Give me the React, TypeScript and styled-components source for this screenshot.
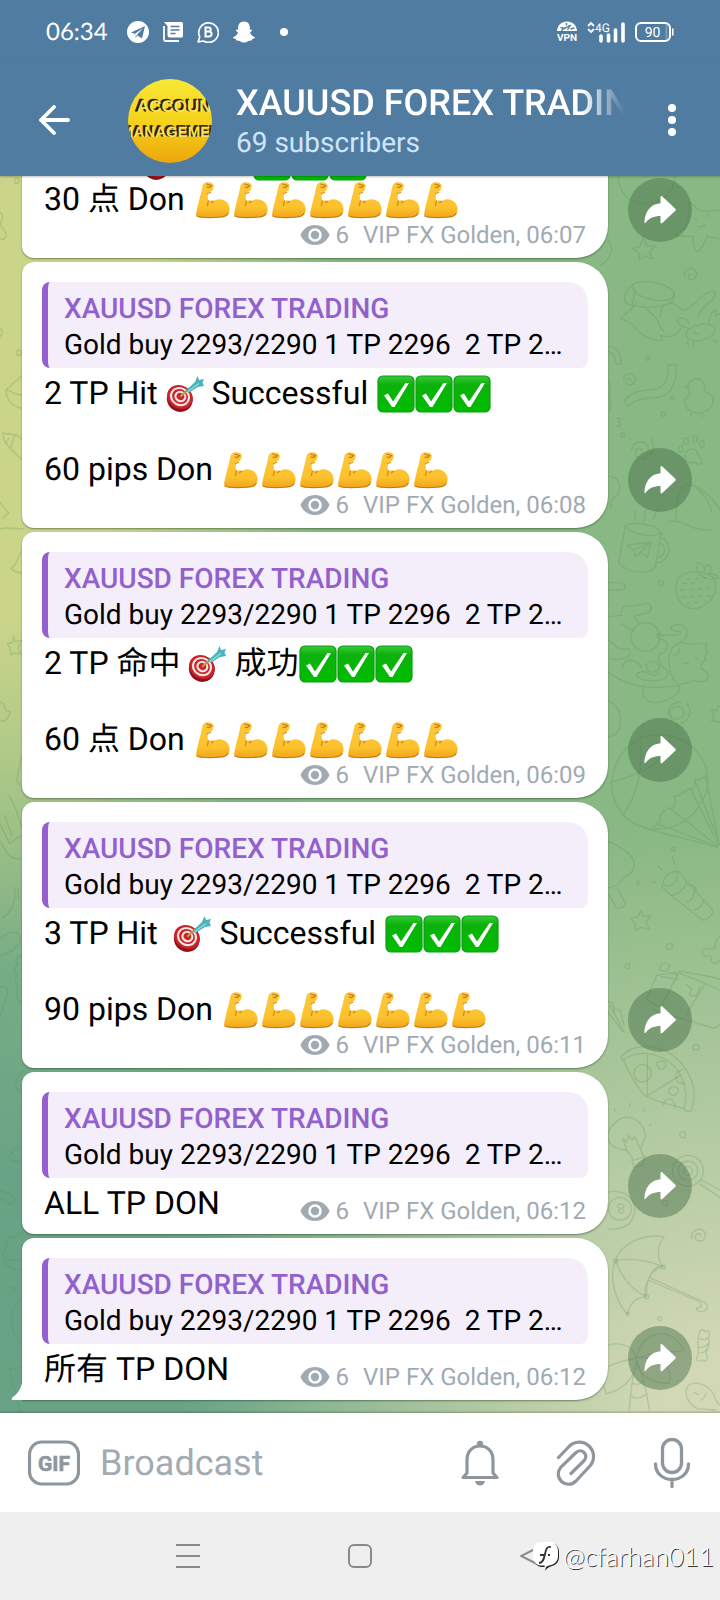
import React from "react";
import styled, { createGlobalStyle } from "styled-components";

const GlobalStyle = createGlobalStyle`
  * { box-sizing: border-box; }
  body { margin: 0; }
  button, input { font: inherit; }
`;

const Screen = styled.div`
  display: flex;
  flex-direction: column;
  height: 100vh;
  overflow: hidden;
  font-family: Roboto, "Noto Sans CJK SC", sans-serif;
  text-rendering: geometricPrecision;
  color: #000;
  svg { display: block; flex: none; }
`;

const StatusBar = styled.div`
  display: flex;
  align-items: center;
  justify-content: space-between;
  height: 64px;
  padding: 0 46px;
  background: #517ca2;
  color: #fff;
`;

const StatusGroup = styled.div<{ $gap: number }>`
  display: flex;
  align-items: center;
  gap: ${(p) => p.$gap}px;
`;

const Clock = styled.time`
  margin-right: 5px;
  font-family: Lato, sans-serif;
  font-size: 24px;
  line-height: 28px;
`;

const Header = styled.header`
  position: relative;
  z-index: 1;
  display: flex;
  align-items: center;
  height: 112px;
  padding-top: 2px;
  background: #517ca2;
  color: #fff;
  box-shadow: 0 1px 2px rgba(0, 0, 0, 0.25);
`;

const IconButton = styled.button<{ $width: number }>`
  display: flex;
  flex: none;
  align-items: center;
  justify-content: center;
  width: ${(p) => p.$width}px;
  height: 88px;
  padding: 0;
  border: 0;
  background: none;
  color: inherit;
`;

const Avatar = styled.div`
  flex: none;
  width: 84px;
  height: 84px;
  margin: 0 24px 0 18px;
  border-radius: 50%;
  overflow: hidden;
  background: linear-gradient(#f8e836, #f6d21c 50%, #eda70c);
`;

const Heading = styled.div`
  flex: 1;
  min-width: 0;
`;

const ChannelName = styled.h1`
  margin: 0 0 2px;
  overflow: hidden;
  font-size: 36px;
  font-weight: 500;
  line-height: 42px;
  white-space: nowrap;
  mask-image: linear-gradient(to right, #000 calc(100% - 42px), transparent);
`;

const Subscribers = styled.p`
  margin: 0;
  color: #cfe5fb;
  font-size: 28px;
  line-height: 34px;
`;

const Chat = styled.main`
  position: relative;
  display: flex;
  flex: 1;
  flex-direction: column;
  justify-content: flex-end;
  gap: 4px;
  min-height: 0;
  padding: 0 28px 13px 22px;
  overflow: hidden;
  background:
    radial-gradient(ellipse 340px 52% at 0% 12%, #cbd58a 45%, #cbd58a00 100%),
    radial-gradient(ellipse 75% 48% at 100% 100%, #d2d8b5 10%, #d2d8b500 100%),
    radial-gradient(ellipse 90% 56% at 0% 100%, #69a386 35%, #69a38600 100%),
    #88b884;
`;

const Doodles = styled.svg<{ $side: "left" | "right" }>`
  position: absolute;
  top: 0;
  ${(p) => p.$side}: 0;
  fill: none;
  stroke: #588f50;
  stroke-opacity: 0.25;
  stroke-width: 4;
  stroke-linecap: round;
  stroke-linejoin: round;
`;

const MessageRow = styled.article`
  position: relative;
  display: flex;
  flex: none;
  align-items: flex-end;
  gap: 20px;
`;

const Bubble = styled.div<{ $last: boolean }>`
  position: relative;
  flex: 1;
  min-width: 0;
  padding: 20px 20px 9px;
  border-radius: 12px 32px 32px ${(p) => (p.$last ? 0 : 12)}px;
  background: #fff;
  box-shadow: 0 1px 2px rgba(40, 70, 40, 0.55);
`;

const Tail = styled.svg`
  position: absolute;
  bottom: 0;
  left: -11px;
`;

const Quote = styled.blockquote`
  margin: 0 0 6px;
  padding: 9px 16px 5px;
  border-left: 6px solid #955fd0;
  border-radius: 8px 20px 8px 8px;
  background: #f4eefa;
  font-size: 28px;
  line-height: 36px;
  white-space: pre;
  overflow: hidden;
`;

const QuoteAuthor = styled.div`
  color: #9261cb;
  font-weight: 500;
`;

const Body = styled.div<{ $inline: boolean }>`
  display: flex;
  flex-direction: ${(p) => (p.$inline ? "row" : "column")};
  align-items: flex-end;
  justify-content: space-between;
  padding: 0 2px;
`;

const BodyText = styled.p`
  align-self: stretch;
  margin: 0;
  padding-bottom: 3px;
  font-size: 32px;
  line-height: 38px;
  white-space: pre-wrap;
`;

const Emoji = styled.svg`
  && { display: inline-block; }
  width: 38px;
  height: 38px;
  margin: -4px 0;
  overflow: visible;
  vertical-align: -5px;
`;

const Meta = styled.div`
  display: flex;
  align-items: center;
  color: #a1aab3;
  font-size: 24px;
  line-height: 28px;
  white-space: nowrap;
`;

const Views = styled.span`
  margin: 0 14px 0 6px;
`;

const ShareButton = styled.button<{ $last: boolean }>`
  display: flex;
  flex: none;
  align-items: center;
  justify-content: center;
  width: 64px;
  height: 64px;
  margin-bottom: ${(p) => (p.$last ? 10 : 16)}px;
  padding: 0;
  border: 0;
  border-radius: 50%;
  background: rgba(70, 110, 75, 0.46);
  color: #fff;
`;

const Composer = styled.form`
  position: relative;
  display: flex;
  align-items: center;
  height: 99px;
  padding-left: 28px;
  background: #fff;
  color: #8e979e;
  box-shadow: 0 -1px 2px rgba(0, 0, 0, 0.25);
`;

const Field = styled.input`
  flex: 1;
  min-width: 0;
  margin-left: 20px;
  padding: 0;
  border: 0;
  outline: 0;
  background: none;
  font-size: 36px;
  line-height: 42px;
  text-rendering: inherit;
  &::placeholder { color: #a3abb2; opacity: 1; }
`;

const NavBar = styled.nav`
  position: relative;
  display: flex;
  justify-content: center;
  height: 88px;
  background: #efefef;
  color: #8a8a8a;
`;

const Watermark = styled.div`
  position: absolute;
  right: 6px;
  bottom: 28px;
  display: flex;
  align-items: center;
  gap: 4px;
  color: #fff;
  font-family: Lato, sans-serif;
  font-size: 26px;
  font-weight: 300;
  line-height: 32px;
  text-shadow: 1px 1px 0 #333;
`;

const Check = () => (
  <Emoji viewBox="-1 0 38 38" role="img" aria-label="check mark">
    <defs>
      <linearGradient id="check" x2="0" y2="1">
        <stop offset="0" stopColor="#39c93a" />
        <stop offset=".25" stopColor="#0cb10c" />
        <stop offset="1" stopColor="#00bd00" />
      </linearGradient>
    </defs>
    <rect x="1" y="1" width="36" height="36" rx="5" fill="url(#check)" stroke="#0a9f10" strokeWidth="1.2" />
    <path d="M7 20.500l4-2 5 8L28.500 8H32L17.500 32h-2.500z" fill="#fff" />
  </Emoji>
);

const Muscle = () => (
  <Emoji viewBox="-1 0 38 38" role="img" aria-label="flexed arm">
    <defs>
      <linearGradient id="arm" x2="0" y2="1">
        <stop offset="0" stopColor="#fdc83c" />
        <stop offset=".7" stopColor="#fcc22e" />
        <stop offset="1" stopColor="#f0a41a" />
      </linearGradient>
    </defs>
    <path
      d="M8.500 5C9 2 12 .8 15 1.300c3 .4 5 2 4.800 4.200L18.600 9c-.6 1.600-3.500 1.800-4.400 3-.9 3-.5 5 .2 8 2-1 4-.8 5.300.2 3.500-3 9-2.600 12.500.6 3.500 3.200 4.700 9 1.800 12.700-2 2.300-5 2.900-9 3.100-6 .5-13 .7-19.500-.2-2-.4-3.500-1-3.400-3.400C3 27 5.500 18 7 12z"
      fill="url(#arm)"
    />
    <path d="M13.500 12.500l3-1M14.400 20l-1 4.500M19.700 20.200l-2.200 1.400" stroke="#d98a14" strokeWidth="1.300" fill="none" strokeLinecap="round" />
    <path d="M12.500 3l5 1.500-2 2-2.600-.5M3 35c5 2 16 1.800 24 1 3.500-.3 6-1.500 7-3.500" stroke="#c77a12" strokeWidth="1.200" fill="none" strokeLinecap="round" />
  </Emoji>
);

const Target = () => (
  <Emoji viewBox="0 0 38 38" role="img" aria-label="bullseye">
    <ellipse cx="14" cy="24.500" rx="13" ry="12.300" fill="#8f1219" transform="rotate(30 14 24)" />
    <ellipse cx="14" cy="22" rx="13.300" ry="11.500" fill="#c9232b" transform="rotate(30 14 22)" />
    <g fill="none" stroke="#f6e4e0" strokeWidth="2.200">
      <ellipse cx="14.300" cy="21.500" rx="9.300" ry="8.300" transform="rotate(30 14 21)" />
      <ellipse cx="14.600" cy="21.300" rx="5" ry="4.500" transform="rotate(30 14 21)" />
    </g>
    <path d="M15 21l8.500-7.500" stroke="#c39a3a" strokeWidth="2.200" strokeLinecap="round" />
    <path d="M20 15.500L29 7l2.500-6 1.500 4L38 4l-1.500 3.500L38 11l-6 1-9.500 6z" fill="#49b4bd" />
    <path d="M22 16.500L33 8.500" stroke="#8ed9da" strokeWidth="1.500" />
  </Emoji>
);

const EMOJI: Record<string, React.FC> = { "✅": Check, "💪": Muscle, "🎯": Target };

const RichText = ({ text }: { text: string }) => (
  <>
    {text.split(/(✅|💪|🎯)/u).map((part, i) => {
      const Icon = EMOJI[part];
      return Icon ? <Icon key={i} /> : part;
    })}
  </>
);

const Eye = () => (
  <svg width="30" height="20" viewBox="0 0 30 20" aria-hidden="true">
    <path d="M15 0C8 0 3 4 .5 10 3 16 8 20 15 20s12-4 14.500-10C27 4 22 0 15 0z" fill="#a1aab3" />
    <circle cx="15" cy="10" r="5.500" fill="#a1aab3" stroke="#fff" strokeWidth="2.600" />
  </svg>
);

interface Post {
  quoted: boolean;
  text: string;
  time: string;
  inline?: boolean;
}

const POSTS: Post[] = [
  { quoted: false, text: "1 命中 🎯 成功✅✅✅\n30 点 Don 💪💪💪💪💪💪💪", time: "06:07" },
  { quoted: true, text: "2 TP Hit 🎯 Successful ✅✅✅\n\n60 pips Don 💪💪💪💪💪💪", time: "06:08" },
  { quoted: true, text: "2 TP 命中 🎯 成功✅✅✅\n\n60 点 Don 💪💪💪💪💪💪💪", time: "06:09" },
  { quoted: true, text: "3 TP Hit  🎯 Successful ✅✅✅\n\n90 pips Don 💪💪💪💪💪💪💪", time: "06:11" },
  { quoted: true, text: "ALL TP DON", time: "06:12", inline: true },
  { quoted: true, text: "所有 TP DON", time: "06:12", inline: true },
];

const Message = ({ post, last }: { post: Post; last: boolean }) => (
  <MessageRow>
    <Bubble $last={last}>
      {last && (
        <Tail width="12" height="24" viewBox="0 0 12 24" aria-hidden="true">
          <path d="M12 0c-.5 9-3 16-10 21-2 1.500-1.500 3 .5 3H12z" fill="#fff" />
        </Tail>
      )}
      {post.quoted && (
        <Quote>
          <QuoteAuthor>XAUUSD FOREX TRADING</QuoteAuthor>
          Gold buy 2293/2290 1 TP 2296{"  "}2 TP 2…
        </Quote>
      )}
      <Body $inline={!!post.inline}>
        <BodyText>
          <RichText text={post.text} />
        </BodyText>
        <Meta>
          <Eye />
          <Views>6</Views>
          VIP FX Golden, {post.time}
        </Meta>
      </Body>
    </Bubble>
    <ShareButton type="button" aria-label="Share" $last={last}>
      <svg width="32" height="28" viewBox="0 0 32 28">
        <path
          d="M16.500 1.200c0-1 1-1.500 1.800-.8l13 12.400c.7.700.7 1.300 0 2l-13 12.300c-.8.700-1.800.3-1.800-.8v-6.300C10 20 5 22 1.800 26.600c-.7 1-1.500.8-1.400-.6C1 16 6 8 16.500 7.200z"
          fill="currentColor"
        />
      </svg>
    </ShareButton>
  </MessageRow>
);

const RightDoodles = () => (
  <Doodles $side="right" width="120" height="1237" viewBox="600 176 120 1237" aria-hidden="true">
    <g transform="translate(360 165) scale(.33333)">
      <path d="M775 35c0 45 30 78 75 80 50 0 90-25 95-80" />
      <path d="M987 110l34 28 62-2M987 110c2 30-2 55-10 78-15 8-25 15-28 22 22 5 40 4 50 4 0 20 5 40 14 48 12-12 22-30 28-48l42 8M1003 160l8 4M1040 155l8-6M1014 183c6 6 16 4 20-4" />
      <path d="M850 220c6 10 8 16 12 24l26-2-20 18 10 22-24-10-16 12-2-22-20-12 24-6z" />
      <path d="M745 225c20 30 10 60-40 85M975 338c-10-22 20-38 32-20 10 20-14 34-22 20-2-6 4-12 8-8" />
      <ellipse cx="880" cy="378" rx="64" ry="26" transform="rotate(12 880 378)" />
      <path d="M818 360c-22 15-30 40-20 55 30 15 100 15 130 0 12-8 16-20 14-30M826 372l-12 68M830 415c-14 18-30 25-48 46 25 8 35 15 50 35 25 25 50 32 76 30l-6-14c30 8 50-2 60-22M850 420c15 25 35 25 44 50 4 15 10 20 16 28M900 455c0-30 20-45 40-40 15 6 20 25 40 18 25-15 50-50 74-54 20 0 10 20 0 28-18 15-30 24-40 46" />
      <ellipse cx="1022" cy="502" rx="44" ry="24" transform="rotate(-14 1022 502)" />
      <path d="M985 490c-25-5-40-20-30-30 15-4 30 4 32 16M1050 480c-8-20 6-42 20-46l-4 18 14-6M1000 500c4 6 10 8 16 4M982 530l4 14M1000 534l0 8M1060 525l10 8" />
      <path d="M925 600l24-2c2 45-10 90-48 98-40 5-70 2-98 28l-10-16c25-35 60-30 95-36 30-8 40-40 37-72zM745 545c25 0 40 20 38 52l-16-2c0-20-8-32-22-36" />
      <path d="M790 645c0-24 35-24 36-2 0 20-30 22-28 4 2-8 14-8 14 0M745 650c14 10 0 20 8 30-14 12 4 18-4 32 10 6-4 20 4 28" />
      <circle cx="863" cy="580" r="6" /><circle cx="937" cy="698" r="6" /><circle cx="910" cy="747" r="7" /><circle cx="788" cy="810" r="6" />
      <path d="M990 685c-14-25 2-43 20-43 20 0 28 18 22 35 15 8 28 12 28 30-4 30-30 40-54 36-30-6-40-35-22-50l6-8zM984 660l-10 6 10 6M992 745l2 10M1025 745l0 12" />
      <path d="M770 760h12l-8 10c14 2 8 18-4 12M815 855c0-32 50-34 50 0 0 30-40 32-38 6 0-14 20-14 20 0 0 4-4 6-8 4M875 822c10 30 0 50-25 62" />
      <path d="M975 870c4-20 35-25 38-4 4 14 16 14 14 26-10 12-20 2-28 0-10 4-25 0-24-22z" />
      <ellipse cx="962" cy="852" rx="7" ry="10" /><ellipse cx="978" cy="828" rx="7" ry="10" /><ellipse cx="1005" cy="822" rx="7" ry="10" /><ellipse cx="1026" cy="838" rx="7" ry="10" />
      <path d="M745 935c40-10 45 60 12 65l-4 26M948 1065c0-60 10-100 32-106 40-5 90 50 120 110M925 1070c50-10 60 30 130 24M1010 970c22 18 38 40 44 68" />
    </g>
    <g transform="translate(600 500) scale(.33333)">
      <path d="M76 76l-20 112c30 35 90 35 110 14l18-105M76 76c30-15 95 0 108 21-20 20-98 5-108-21M184 115c35 8 30 70-14 74M182 130c18 8 14 40-8 44M80 136l74-10-12 46-22-14-14 12-4-20zM102 150l52-24-34 32M104 60c10-10-8-14 2-26M132 62c10-14-6-18 8-34M160 56c12-10 0-18 14-30" />
      <path d="M232 240c20-32 70-32 108-8 20 40-5 82-50 94-50 5-70-40-58-86zM298 222c-14-20-8-34-4-36 14 6 20 14 20 26 4-20 14-20 20-12 2 12-4 20-16 24 16-6 30 0 38 8-16 8-44 6-58-10" />
      <path strokeDasharray="8 18" d="M250 250l80-5M244 270l90-5M246 292l90-5M260 310l60-5M262 238l55-5" />
      <circle cx="183" cy="250" r="8" /><path d="M24 248h36c20 2 20 24 0 22H24M30 350l34-4c0-16 0-26 14-28 22 0 40 0 56-8 20 0 24 12 16 22-10 12-30 10-46 16l12 22M64 373l36 20" />
      <circle cx="136" cy="411" r="43" />
      <path d="M180 405h46c25-2 18-14 0-12-20-4-16-18 6-20 36 0 40 40 8 54l30 6c20 0 30-2 50-4-6 16-2 20 2 30-12 8-8 14-4 22-16 4-10 16-16 24 30 12 30 40-2 40-28-10-40 10-66 6-24-14-36-70-22-96 4-16 18-24 34-28M222 466l14-6 2-14M250 490h16M286 474l10 6M180 400c-16 0-10 14 0 16 34 10 26 44 0 44-8 14 0 40 20 50 16 20-16 40-66 30-40-10-20-30 4-24 20 16 40 12 40-8 2-20-20-34-40-14 0 20 20 30 34 16M24 418c24 24 40 36 60 28 24 20-20 40-54 30M66 505c8-36 40-30 60-2M24 516c60 44 120 54 214 40 6 30-40 52-78 52-30-6-36-30-30-52" />
      <path d="M24 604c50 10 50 108 0 106M215 650c-14-20 4-32 22-30 34 10 8 50-22 34-24-14-4-50 28-48M262 612c14 20 8 50-18 58M358 618l-10 14-14-4 8 18-8 16 26 4" />
      <path d="M36 850c4-90 70-150 150-146 80 4 130 64 136 120 10 60-40 150-130 162-100 10-158-60-156-136zM30 848c90-25 180-60 180-145M120 706c10 90-4 180-54 240M322 826c-16 10-30 20-38 8 0 16 4 30-12 34-20-4-24 24-50 20 10 20-2 44-18 36-8 12-26 12-24 30 2 20-10 20-20 26M315 824l43 210M284 840l74 190M272 868l84 168M210 925l144 114M168 970l186 70M130 984l224 58" />
      <circle cx="220" cy="1048" r="6" /><circle cx="115" cy="1150" r="5" />
      <path d="M218 1072l6 20M174 1100l12 10M154 1144l14 4" />
      <path d="M186 1160c4-30 24-48 50-46l24 30c-4 20-26 42-48 42zM190 1152c20 20 50-14 42-34M212 1186l92 72c16 8 40-16 32-30l-76-84M260 1206c14-4 24-20 22-30M284 1230c16-4 26-18 26-30M262 1154c20 0 30 10 24 20" />
      <path d="M24 1024c50 20 90 50 76 84-10 20-26 18-30 26-14 22-30 26-46 30M52 1164l24 46c0 12-20 18-28 12L24 1180M122 1232l8 18 22-2-14 18 10 22-24-6-18 10-2-22-12-14 22-6z" />
      <circle cx="208" cy="1340" r="9" /><circle cx="82" cy="1398" r="7" />
      <path d="M358 1312c-14 10-16 30-14 34-24 0-46-2-36 18 10 10 26-2 28 10-8 18 10 20 22 8" />
    </g>
    <g transform="translate(600 940) scale(.33333)">
      <path d="M178 90c4-24 20-28 32-10-8 16-20 16-32 10zM170 106l76-12c40 10 76 10 112 24M170 106l-30 72 40 24 60-108M184 110l52 8M204 100l28 2-48 98M240 100l76 30-60 98M316 130l42 20M258 134c20 10 20 20 8 30 20 10 30 0 32-20M160 210l178 54c10 0 20-6 20-10M24 184l14 4 6 30M30 196l42 80M24 216l44 58M44 204l18 10 10 40" />
      <circle cx="288" cy="322" r="9" />
      <path d="M62 352c40-48 130-44 184 20 40 50 42 100 28 140-10 6-18 2-22-6 20-70-20-130-60-150-50-24-96-20-122 6zM70 362c20 40 40 80 66 106 40 20 80 26 116 38M142 340v128l102-64" />
      <circle cx="128" cy="400" r="26" /><path d="M248 390c-30 4-28 40 6 42M190 496c4-30 36-24 34 8M176 366c12-8 26 2 20 14-10 14-26 10-24-14M208 446c14-14 36 0 24 14-14 14-30 0-24-14" />
      <circle cx="248" cy="584" r="9" />
      <path d="M98 660c-2-14-8-20-20-30-60 0-80-60-10-98 50-6 76 40 64 70-14 20-10 38 4 50-6 24-16 30-34 30l-6-20 40-12M84 640l-16-44 12 10 6-20 10 14 8-10 26 56M46 512l-4-4M88 490l3 8M130 514l6-6M148 556l6-4" />
      <circle cx="264" cy="692" r="46" /><circle cx="264" cy="692" r="29" /><circle cx="264" cy="692" r="13" />
      <path d="M304 720l56 30M300 732l60 40" />
      <circle cx="195" cy="790" r="8" /><circle cx="60" cy="806" r="34" />
      <path d="M24 756c50-10 80 20 80 56-4 44-40 60-80 54M58 793c14-6 20 10 6 12-14 4-8 18 2 14 12-6 2-14-4-14-14-2-10-12-4-12" />
      <path d="M276 896c-10-30 40-40 40-10 0 24-34 22-30 2 4-12 18-8 16 0" />
      <path d="M192 890c-60-10-130 20-146 72-20 50 0 120 36 160 10-30 20-50 58-52-4-50 10-80 50-90-20-20-20-60 2-90zM46 962c50-10 100 0 144 18M46 962c20 50 50 90 94 108M140 1070c-20-10 20-110 50-90M148 1012l140 64c30 10 40 20 30 34-10 8-24 6-30-4l16-6-4-14-156-66" />
      <circle cx="47" cy="962" r="6" /><circle cx="190" cy="981" r="6" /><circle cx="140" cy="1070" r="6" /><circle cx="83" cy="1122" r="5" /><circle cx="179" cy="1136" r="6" />
      <path d="M298 1180c0-14 14-12 18-4 10-10 16 0 10 14 6 20-4 40-8 50 8 18 0 30-10 20-14 10-24-2-14-14 4-20-6-40 4-66zM300 1195c10 8 20 4 26-4M296 1220c10 6 24 0 28-10M294 1240c14 0 24-6 26-14" />
      <path d="M24 1216c40-12 80 4 84 40 20-90 110-100 142-26-20 10-80 0-138 24 80-10 110 40 94 76-40 0-86-14-96-64-4 30-24 80-92 96l-8-30M24 1280c40-20 60-20 84-24M88 1410c4-50 6-90 22-150 20 50 30 90 38 150M94 1370c16 8 30 4 42-6M98 1330c14 6 24 2 30-6" />
      <path d="M262 1340c20-20 60-10 80 24 4 20 10 26 18 30M262 1340c-10 30 0 50 30 66l54 4M282 1358l14 6M304 1380c8-6 12-12 14-20" />
    </g>
  </Doodles>
);

const LeftDoodles = () => (
  <Doodles $side="left" width="24" height="1237" viewBox="0 176 24 1237" aria-hidden="true">
    <g transform="translate(0 176) scale(.33333 .39543)">
      <circle cx="50" cy="12" r="7" /><circle cx="57" cy="447" r="7" />
      <path d="M0 92c10 6 10 14 4 22-6 8 0 16 10 24 10 16 2 26-14 20M0 386c10 6 10 12 0 20M66 505l-48 36c0 24 20 44 48 46M18 541c16 0 30 16 48 12M8 650l44 6 14 10M8 650c0 24 24 40 58 68M26 664l-10 14M44 658c-8 10-8 20-10 28M0 826l26 26-18 14M0 892c30-6 60 4 80 0M66 948c-14 16-16 40-34 44 10 8 20 10 34 12M40 1162l6 16 20-4-12 20 10 16-20-4-12 4-2-16-8-12 16-2zM0 1330c12 0 12 14 20 22l12 4-8 12c-4 10-14 12-24 10M64 1470l-14 60 14 14" />
    </g>
    <g transform="translate(0 796) scale(.33333 .39543)">
      <path d="M28 0c20 30 30 50 36 80M0 70l28 50 36-20M0 114c20 30 30 50 64 44M14 50l22 50M42 232c8 20 0 60-34 76M54 236l2 26M0 404c90-20 70-90 0-44M64 404c-20 0-18 20-8 22-20 10-14 20-4 26-10 10-6 20 2 24-6 20-4 40 10 50M0 482c20 0 28 4 20 20-10 30-10 40-20 56M90 690c-50 10-50 50-30 60M66 890c-20-6-30 4-26 14-20-6-10 24 0 18 10 10 20 0 26-6M0 998c20 4 40 12 46 24 0 10-10 12-18 8L0 1018M10 1166c-4-16 10-22 12-30-4-20 14-30 24-18 10-20 30-14 36 0M10 1166c20 10 40 10 56 2M10 1170c4 20 30 32 56 26M66 1270c-40 20-44 80-2 116M28 1450l34 110M28 1450c10-4 20 0 34-6" />
      <circle cx="40" cy="1248" r="6" />
    </g>
  </Doodles>
);

export default function App() {
  return (
    <Screen>
      <GlobalStyle />
      <StatusBar>
        <StatusGroup $gap={14}>
          <Clock>06:34</Clock>
          <svg width="22" height="22" viewBox="0 0 22 22" aria-hidden="true">
            <circle cx="11" cy="11" r="11" fill="#fff" />
            <path d="M4 11.400L18 5l-3 12.500-4.500-3-2 2.500-.8-4.200z" fill="#517ca2" />
            <path d="M8 12.800L16 7l-6 6.800-1.500 3" fill="#fff" />
          </svg>
          <svg width="20" height="20" viewBox="0 0 20 20" aria-hidden="true">
            <path d="M1 4v13.500c0 1 .5 1.500 1.500 1.500H16" fill="none" stroke="#fff" strokeWidth="1.800" />
            <path d="M1 0h17.500q1.500 0 1.500 1.500v12.500q0 1.500-1.500 1.500h-12q-2 0-2-2V4z" fill="#fff" />
            <path d="M7.500 4.500h9M7.500 8h9M7.500 11.500h5" stroke="#517ca2" strokeWidth="1.600" />
          </svg>
          <svg width="22" height="22" viewBox="0 0 22 22" aria-hidden="true" fill="none" stroke="#fff">
            <path d="M1.200 20.800l1.500-5A9.800 9.800 0 1 1 6.500 20z" strokeWidth="1.700" strokeLinejoin="round" />
            <path d="M8.500 6.500v9h3.600a2.500 2.500 0 0 0 0-5H8.500h3.200a2 2 0 0 0 0-4z" strokeWidth="2" />
          </svg>
          <svg width="22" height="22" viewBox="0 0 22 22" aria-hidden="true">
            <path
              d="M11 .5c4 0 5.800 2.800 5.800 6v2.300c1-.3 2-.3 2.200.5.200.9-1 1.300-2 1.900.6 2.400 2.400 4.200 5 5-.2 1.300-1.600 1.500-2.800 1.800l-.5 1.500c-1.500-.2-2.500-.1-3.700.7-1.300.9-2.500 1.300-4 1.300s-2.700-.4-4-1.300c-1.200-.8-2.200-.9-3.700-.7L2.800 18C1.600 17.700.200 17.500 0 16.200c2.600-.8 4.400-2.600 5-5-1-.6-2.200-1-2-1.900.200-.8 1.200-.8 2.200-.5V6.500c0-3.200 1.800-6 5.800-6z"
              fill="#fff"
            />
          </svg>
          <svg width="30" height="8" viewBox="0 0 30 8" aria-hidden="true">
            <circle cx="15" cy="4" r="4" fill="#fff" />
          </svg>
        </StatusGroup>
        <StatusGroup $gap={9}>
          <svg width="22" height="24" viewBox="0 0 22 24" aria-hidden="true">
            <path d="M1 11C1.500 5 5.500 1.500 11 1.500S20.500 5 21 11z" fill="#fff" />
            <path d="M4.500 7.500l3 .5M10.500 3v2.500M5.500 11c1-2 2-3 4-3l5-3-3 5M14.500 9l4-1" stroke="#517ca2" strokeWidth="1.400" fill="none" />
            <text x="11" y="21" fill="#fff" fontSize="10" fontWeight="700" textAnchor="middle">VPN</text>
          </svg>
          <svg width="39" height="22" viewBox="0 0 39 22" aria-hidden="true">
            <path d="M1 5l3-3 3 3M1 8l3 3 3-3" fill="none" stroke="#fff" strokeWidth="1.800" />
            <text x="8" y="11" fill="#fff" fontSize="12">4G</text>
            <path d="M14 15v5M21.500 14v6M28.500 9v11M36 3v17" stroke="#fff" strokeWidth="3.600" strokeLinecap="round" />
          </svg>
          <svg width="39" height="20" viewBox="0 0 39 20" aria-hidden="true">
            <rect x="1" y="1" width="34" height="18" rx="5" fill="none" stroke="#fff" strokeWidth="2" />
            <path d="M31.500 2v16" stroke="#fff" strokeOpacity=".25" strokeWidth="2" />
            <path d="M37.800 7v6" stroke="#fff" strokeWidth="1.600" strokeLinecap="round" />
            <text x="17.500" y="15" fill="#fff" fontSize="14" textAnchor="middle">90</text>
          </svg>
        </StatusGroup>
      </StatusBar>

      <Header>
        <IconButton type="button" aria-label="Back" $width={110}>
          <svg width="34" height="32" viewBox="0 0 34 32" fill="none" stroke="#fff" strokeWidth="3.800" strokeLinecap="round" strokeLinejoin="round">
            <path d="M30 15H3M16 2L3 15l13 13" />
          </svg>
        </IconButton>
        <Avatar>
          <svg width="84" height="84" viewBox="0 0 84 84" role="img" aria-label="Channel photo" fontFamily="Liberation Sans, sans-serif" fontWeight="700">
            <g fill="#2a2000" stroke="#2a2000" strokeWidth="1">
              <text x="7" y="32" fontSize="17">ACCOUNT</text>
              <text x="-9" y="57" fontSize="15">MANAGEMENT</text>
            </g>
            <g fill="#fbe05a">
              <text x="9" y="33" fontSize="17">ACCOUNT</text>
              <text x="-7" y="58" fontSize="15">MANAGEMENT</text>
            </g>
          </svg>
        </Avatar>
        <Heading>
          <ChannelName>XAUUSD FOREX TRADING</ChannelName>
          <Subscribers>69 subscribers</Subscribers>
        </Heading>
        <IconButton type="button" aria-label="More" $width={96}>
          <svg width="8" height="34" viewBox="0 0 8 34" fill="#fff">
            <circle cx="4" cy="4" r="4" />
            <circle cx="4" cy="16" r="4" />
            <circle cx="4" cy="28" r="4" />
          </svg>
        </IconButton>
      </Header>

      <Chat>
        <LeftDoodles />
        <RightDoodles />
        {POSTS.map((post, i) => (
          <Message key={i} post={post} last={i === POSTS.length - 1} />
        ))}
      </Chat>

      <Composer onSubmit={(e) => e.preventDefault()}>
        <IconButton type="button" aria-label="GIFs and stickers" $width={52}>
          <svg width="52" height="46" viewBox="0 0 52 46">
            <rect x="1.500" y="2" width="49" height="42" rx="12" fill="none" stroke="currentColor" strokeWidth="3.200" />
            <text x="26" y="30.500" fill="currentColor" stroke="currentColor" strokeWidth=".6" fontSize="21" fontWeight="700" textAnchor="middle">GIF</text>
          </svg>
        </IconButton>
        <Field type="text" placeholder="Broadcast" aria-label="Broadcast" />
        <IconButton type="button" aria-label="Notifications" $width={96}>
          <svg width="38" height="46" viewBox="0 0 38 46" fill="none" stroke="currentColor" strokeWidth="3.200" strokeLinejoin="round">
            <path d="M6 33V20C6 11 12 6 19 6s13 5 13 14v13l4 4.500H2z" />
            <circle cx="19" cy="4" r="3.200" fill="currentColor" stroke="none" />
            <path d="M14 41h10c-.8 3-2.500 4.500-5 4.500S14.800 44 14 41z" fill="currentColor" stroke="none" />
          </svg>
        </IconButton>
        <IconButton type="button" aria-label="Attach" $width={96}>
          <svg width="40" height="46" viewBox="0 0 40 46" fill="none" stroke="currentColor" strokeWidth="3.200" strokeLinecap="round">
            <path d="M2.500 17.500L13 6.500c5.500-5.500 14-6 20-.5 6 6 6 14.500.5 20.500L20 41c-4 4-10 4.500-14.500.5-4.500-4.500-4-10.500-.5-14.500l14.500-14c3-3 6.500-2.500 8.500-.5 2.500 2.500 2.300 6-.3 8.500L15 33.500" />
          </svg>
        </IconButton>
        <IconButton type="button" aria-label="Record voice message" $width={96}>
          <svg width="38" height="52" viewBox="0 0 38 52" fill="none" stroke="currentColor" strokeWidth="3.300" strokeLinecap="round">
            <rect x="9.500" y="2.500" width="19" height="33" rx="9.500" />
            <path d="M2.500 27c0 9 7 15.500 16.500 15.500S35.500 36 35.500 27M19 42.500V49.500" />
          </svg>
        </IconButton>
      </Composer>

      <NavBar>
        <IconButton type="button" aria-label="Recent apps" $width={172}>
          <svg width="24" height="26" viewBox="0 0 24 26" stroke="currentColor" strokeWidth="2">
            <path d="M0 2h24M0 13h24M0 24h24" />
          </svg>
        </IconButton>
        <IconButton type="button" aria-label="Home" $width={172}>
          <svg width="24" height="24" viewBox="0 0 24 24" fill="none" stroke="currentColor" strokeWidth="2">
            <rect x="1" y="1" width="22" height="22" rx="5" />
          </svg>
        </IconButton>
        <IconButton type="button" aria-label="Go back" $width={172}>
          <svg width="24" height="24" viewBox="0 0 24 24" fill="none" stroke="currentColor" strokeWidth="2">
            <path d="M17 4L1 12l16 8" />
          </svg>
        </IconButton>
        <Watermark>
          <svg width="26" height="30" viewBox="0 0 26 30" aria-hidden="true">
            <path d="M8 2h11c4 0 7 4 7 9v5c0 5-3 8-7 9-3 1-5 2-7 5l1-4H8c-5-1-7-5-7-10v-5c0-5 3-9 7-9z" fill="#222" />
            <path d="M7 1h11c4 0 7 4 7 9v5c0 5-3 8-7 9-3 .5-5 1.500-6 3l-.500-2.500H7c-5-1-7-5-7-10V10c0-5 3-9 7-9z" fill="#fff" />
            <path d="M18 6c-4-1-5 2-6 7s-2 9-6 9M7 14h5M15 14h2" stroke="#333" strokeWidth="1.800" fill="none" />
          </svg>
          @cfarhan011
        </Watermark>
      </NavBar>
    </Screen>
  );
}
